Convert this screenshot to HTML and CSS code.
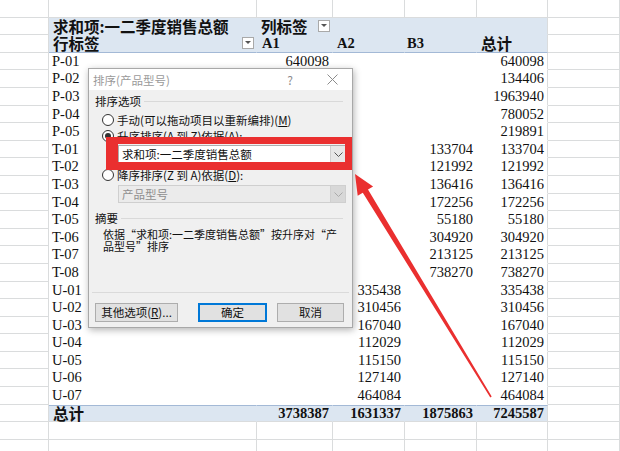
FILE: index.html
```html
<!DOCTYPE html>
<html lang="zh-CN">
<head>
<meta charset="utf-8">
<title>数据透视表排序</title>
<link rel="stylesheet" href="styles.css">
</head>
<body>
<div class="sheet">
  <div class="row"><div class="c a"></div><div class="c b"></div><div class="c cc"></div><div class="c d"></div><div class="c e"></div><div class="c f"></div><div class="c g"></div></div>
  <div class="row">
    <div class="c a"></div>
    <div class="c b pv hd cj h-l">求和项:一二季度销售总额</div>
    <div class="c cc pv hd cj h-l hbtn"><span>列标签</span><span class="fb"></span></div>
    <div class="c d pv hd"></div><div class="c e pv hd"></div><div class="c f pv hd"></div>
    <div class="c g"></div>
  </div>
  <div class="row">
    <div class="c a"></div>
    <div class="c b pv hd hb cj h-l hbtn"><span>行标签</span><span class="fb"></span></div>
    <div class="c cc pv hd hb h-l hA1">A1</div>
    <div class="c d pv hd hb h-l">A2</div>
    <div class="c e pv hd hb h-l hB3">B3</div>
    <div class="c f pv hd hb cj h-l">总计</div>
    <div class="c g"></div>
  </div>
  <div class="row"><div class="c a"></div><div class="c b pv l">P-01</div><div class="c cc pv n">640098</div><div class="c d pv n"></div><div class="c e pv n"></div><div class="c f pv n">640098</div><div class="c g"></div></div>
  <div class="row"><div class="c a"></div><div class="c b pv l">P-02</div><div class="c cc pv n">134406</div><div class="c d pv n"></div><div class="c e pv n"></div><div class="c f pv n">134406</div><div class="c g"></div></div>
  <div class="row"><div class="c a"></div><div class="c b pv l">P-03</div><div class="c cc pv n">1963940</div><div class="c d pv n"></div><div class="c e pv n"></div><div class="c f pv n">1963940</div><div class="c g"></div></div>
  <div class="row"><div class="c a"></div><div class="c b pv l">P-04</div><div class="c cc pv n">780052</div><div class="c d pv n"></div><div class="c e pv n"></div><div class="c f pv n">780052</div><div class="c g"></div></div>
  <div class="row"><div class="c a"></div><div class="c b pv l">P-05</div><div class="c cc pv n">219891</div><div class="c d pv n"></div><div class="c e pv n"></div><div class="c f pv n">219891</div><div class="c g"></div></div>
  <div class="row"><div class="c a"></div><div class="c b pv l">T-01</div><div class="c cc pv n"></div><div class="c d pv n"></div><div class="c e pv n">133704</div><div class="c f pv n">133704</div><div class="c g"></div></div>
  <div class="row"><div class="c a"></div><div class="c b pv l">T-02</div><div class="c cc pv n"></div><div class="c d pv n"></div><div class="c e pv n">121992</div><div class="c f pv n">121992</div><div class="c g"></div></div>
  <div class="row"><div class="c a"></div><div class="c b pv l">T-03</div><div class="c cc pv n"></div><div class="c d pv n"></div><div class="c e pv n">136416</div><div class="c f pv n">136416</div><div class="c g"></div></div>
  <div class="row"><div class="c a"></div><div class="c b pv l">T-04</div><div class="c cc pv n"></div><div class="c d pv n"></div><div class="c e pv n">172256</div><div class="c f pv n">172256</div><div class="c g"></div></div>
  <div class="row"><div class="c a"></div><div class="c b pv l">T-05</div><div class="c cc pv n"></div><div class="c d pv n"></div><div class="c e pv n">55180</div><div class="c f pv n">55180</div><div class="c g"></div></div>
  <div class="row"><div class="c a"></div><div class="c b pv l">T-06</div><div class="c cc pv n"></div><div class="c d pv n"></div><div class="c e pv n">304920</div><div class="c f pv n">304920</div><div class="c g"></div></div>
  <div class="row"><div class="c a"></div><div class="c b pv l">T-07</div><div class="c cc pv n"></div><div class="c d pv n"></div><div class="c e pv n">213125</div><div class="c f pv n">213125</div><div class="c g"></div></div>
  <div class="row"><div class="c a"></div><div class="c b pv l">T-08</div><div class="c cc pv n"></div><div class="c d pv n"></div><div class="c e pv n">738270</div><div class="c f pv n">738270</div><div class="c g"></div></div>
  <div class="row"><div class="c a"></div><div class="c b pv l">U-01</div><div class="c cc pv n"></div><div class="c d pv n">335438</div><div class="c e pv n"></div><div class="c f pv n">335438</div><div class="c g"></div></div>
  <div class="row"><div class="c a"></div><div class="c b pv l">U-02</div><div class="c cc pv n"></div><div class="c d pv n">310456</div><div class="c e pv n"></div><div class="c f pv n">310456</div><div class="c g"></div></div>
  <div class="row"><div class="c a"></div><div class="c b pv l">U-03</div><div class="c cc pv n"></div><div class="c d pv n">167040</div><div class="c e pv n"></div><div class="c f pv n">167040</div><div class="c g"></div></div>
  <div class="row"><div class="c a"></div><div class="c b pv l">U-04</div><div class="c cc pv n"></div><div class="c d pv n">112029</div><div class="c e pv n"></div><div class="c f pv n">112029</div><div class="c g"></div></div>
  <div class="row"><div class="c a"></div><div class="c b pv l">U-05</div><div class="c cc pv n"></div><div class="c d pv n">115150</div><div class="c e pv n"></div><div class="c f pv n">115150</div><div class="c g"></div></div>
  <div class="row"><div class="c a"></div><div class="c b pv l">U-06</div><div class="c cc pv n"></div><div class="c d pv n">127140</div><div class="c e pv n"></div><div class="c f pv n">127140</div><div class="c g"></div></div>
  <div class="row"><div class="c a"></div><div class="c b pv l">U-07</div><div class="c cc pv n"></div><div class="c d pv n">464084</div><div class="c e pv n"></div><div class="c f pv n">464084</div><div class="c g"></div></div>
  <div class="row">
    <div class="c a"></div>
    <div class="c b pv hd tt cj h-l">总计</div>
    <div class="c cc pv hd tt n">3738387</div>
    <div class="c d pv hd tt n">1631337</div>
    <div class="c e pv hd tt n">1875863</div>
    <div class="c f pv hd tt n">7245587</div>
    <div class="c g"></div>
  </div>
  <div class="row"><div class="c a"></div><div class="c b"></div><div class="c cc"></div><div class="c d"></div><div class="c e"></div><div class="c f"></div><div class="c g"></div></div>
  <div class="row"><div class="c a"></div><div class="c b"></div><div class="c cc"></div><div class="c d"></div><div class="c e"></div><div class="c f"></div><div class="c g"></div></div>
</div>

<div class="dlg">
  <div class="dlg-title">
    <span class="dt">排序(产品型号)</span>
    <span class="dq">?</span>
    <svg class="dx" width="11" height="11" viewBox="0 0 11 11"><path d="M0.5 0.5 L10.5 10.5 M10.5 0.5 L0.5 10.5" stroke="#8c8c8c" stroke-width="1" fill="none"/></svg>
  </div>
  <div class="dlg-body">
    <div class="grp g1"><span>排序选项</span><i class="gl"></i></div>
    <div class="opt o1"><span class="radio"></span><span>手动(可以拖动项目以重新编排)(<u>M</u>)</span></div>
    <div class="opt"><span class="radio on"></span><span>升序排序(A 到 Z)依据(<u>A</u>):</span></div>
    <div class="combo c1"><span class="ct">求和项:一二季度销售总额</span><span class="dd"><svg width="9" height="5" viewBox="0 0 9 5"><path d="M0.5 0.5 L4.5 4.5 L8.5 0.5" stroke="#555" fill="none"/></svg></span></div>
    <div class="opt o3"><span class="radio"></span><span>降序排序(Z 到 A)依据(<u>D</u>):</span></div>
    <div class="combo dis"><span class="ct">产品型号</span><span class="dd"><svg width="9" height="5" viewBox="0 0 9 5"><path d="M0.5 0.5 L4.5 4.5 L8.5 0.5" stroke="#aaa" fill="none"/></svg></span></div>
    <div class="grp g2"><span>摘要</span><i class="gl"></i></div>
    <div class="sum">依据“求和项:一二季度销售总额”按升序对“产<br>品型号”排序</div>
    <div class="sep"></div>
    <div class="btns">
      <span class="btn b1">其他选项(<u>R</u>)...</span>
      <span class="btn b2">确定</span>
      <span class="btn b3">取消</span>
    </div>
  </div>
</div>

<div class="redbox"></div>
<svg class="arrow" width="620" height="451" viewBox="0 0 620 451">
  <polygon points="355,174 373.1,186.4 368.0,189.5 491.7,396.6 490.3,397.4 362.8,192.7 357.7,195.8" fill="#ea2f2f"/>
</svg>
</body>
</html>
```

FILE: styles.css
```css
* { box-sizing: border-box; }

body {
  margin: 0;
  width: 620px;
  height: 451px;
  overflow: hidden;
  background: #fff;
  position: relative;
}

.sheet {
  font-family: "Liberation Serif", "Noto Sans CJK SC", serif;
  font-size: 14.5px;
  color: #111;
}

.row {
  display: flex;
  height: 17.6px;
  line-height: 16.6px;
}

.c {
  flex: none;
  border-right: 1px solid #dadcdd;
  border-bottom: 1px solid #dadcdd;
  white-space: nowrap;
}

.a { width: 49px; }
.b { width: 208px; }
.cc { width: 76px; }
.d { width: 72px; }
.e { width: 72px; }
.f { width: 71px; }
.g { flex: 1 1 auto; }

.pv {
  border-right-color: transparent;
  border-bottom-color: transparent;
}
.f.pv { border-right-color: #dadcdd; }

.hd {
  background: #dce6f1;
  font-weight: bold;
}
.hb { border-bottom-color: #a3b9d6; }
.tt {
  border-top: 1px solid #a3b9d6;
  border-bottom-color: #dadcdd;
  line-height: 15.6px;
}

.cj {
  font-family: "Noto Sans CJK SC", sans-serif;
  font-size: 15.5px;
}

.h-l { padding-left: 4px; }
.hA1 { padding-left: 5px; }
.hB3 { padding-left: 2px; }

.hbtn {
  display: flex;
  align-items: center;
  justify-content: space-between;
}

.fb {
  flex: none;
  position: relative;
  width: 12px;
  height: 12px;
  margin-right: 2px;
  border: 1px solid #a9a9a9;
  background: #fff;
}
.fb::after {
  content: "";
  position: absolute;
  left: 2px;
  top: 3px;
  border-left: 3px solid transparent;
  border-right: 3px solid transparent;
  border-top: 3px solid #555;
}

.l { padding-left: 3px; }
.n { text-align: right; padding-right: 3px; }

/* dialog */
.dlg {
  position: absolute;
  left: 88px;
  top: 68px;
  width: 265px;
  height: 260px;
  border: 1px solid #a8a8a8;
  background: #f0f0f0;
  box-shadow: 1px 2px 7px rgba(0, 0, 0, 0.3);
  font-family: "Noto Sans CJK SC", sans-serif;
  font-size: 11.5px;
  color: #111;
}

.dlg-title {
  height: 21px;
  background: #fff;
  display: flex;
  align-items: center;
  padding-left: 4px;
  color: #9a9a9a;
}
.dt { flex: 1; }
.dq { font-size: 12px; margin-right: 34px; color: #8c8c8c; }
.dx { margin-right: 14px; }

.dlg-body {
  padding: 0 6px;
}

.grp {
  display: flex;
  align-items: center;
  height: 16px;
  line-height: 16px;
}
.g1 { margin-top: 3px; }
.g2 { margin-top: 7px; }
.gl {
  flex: 1;
  height: 0;
  border-top: 1px solid #d9d9d9;
  margin: 1px 3px 0 3px;
}

.opt {
  display: flex;
  align-items: center;
  height: 16px;
  line-height: 16px;
  padding-left: 7px;
  white-space: nowrap;
}
.o1 { margin-top: 3px; }
.o3 { margin-top: 4px; }

.radio {
  flex: none;
  width: 12px;
  height: 12px;
  border: 1px solid #333;
  border-radius: 50%;
  background: #fff;
  margin-right: 3px;
  position: relative;
}
.radio.on::after {
  content: "";
  position: absolute;
  left: 2px;
  top: 2px;
  width: 6px;
  height: 6px;
  border-radius: 50%;
  background: #333;
}

.combo {
  display: flex;
  align-items: stretch;
  margin-left: 23px;
  width: 228px;
  height: 18px;
  border: 1px solid #adadad;
  background: #fff;
}
.c1 { margin-top: 1px; }
.combo.dis {
  margin-top: 2px;
  background: #ebebeb;
  border-color: #cfcfcf;
  color: #8f8f8f;
}
.ct {
  flex: 1;
  padding-left: 3px;
  line-height: 16px;
}
.dd {
  flex: none;
  width: 15px;
  display: flex;
  align-items: center;
  justify-content: center;
  background: #e8e8e8;
  border-left: 1px solid #d0d0d0;
}
.dis .dd { background: #d8d8d8; }

.sum {
  margin-top: 3px;
  margin-left: 8px;
  font-size: 11px;
  line-height: 11.5px;
  white-space: nowrap;
}

.sep {
  margin: 40px -3px 0 -3px;
  height: 0;
  border-top: 1px solid #dadada;
}

.btns {
  display: flex;
  margin-top: 10px;
}
.btn {
  height: 19px;
  line-height: 17px;
  text-align: center;
  border: 1px solid #adadad;
  background: #e1e1e1;
  white-space: nowrap;
}
.b1 { width: 83px; }
.b2 {
  width: 69px;
  margin-left: 20px;
  border-color: #0078d7;
  box-shadow: inset 0 0 0 1px #0078d7;
}
.b3 { width: 67px; margin-left: 10px; }

/* annotation overlays */
.redbox {
  position: absolute;
  left: 106px;
  top: 137px;
  width: 246px;
  height: 33px;
  border: 7px solid #ea2f2f;
  border-left-width: 12px;
  border-bottom-width: 8px;
}

.arrow {
  position: absolute;
  left: 0;
  top: 0;
  pointer-events: none;
}
```
